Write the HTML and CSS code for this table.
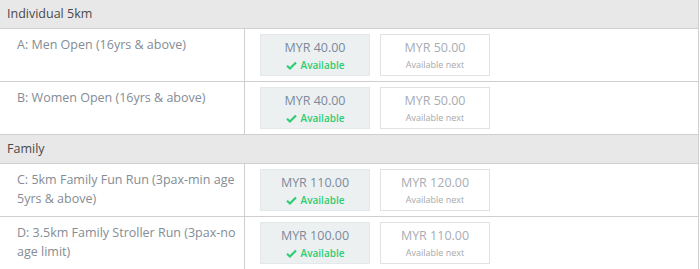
FILE: index.html
```html
<!DOCTYPE html>
<html>
<head>
<meta charset="utf-8">
<link rel="stylesheet" href="styles.css">
</head>
<body>
<div class="table">
  <div class="group-head">Individual 5km</div>
  <div class="row">
    <div class="cat">A: Men Open (16yrs &amp; above)</div>
    <div class="prices">
      <div class="box current"><div class="price">MYR 40.00</div><div class="status"><svg class="tick" viewBox="0 0 12 10"><path d="M1 5.2 L4.3 8.3 L11 1.6" fill="none" stroke="#2ecc71" stroke-width="2.4"/></svg>Available</div></div>
      <div class="box next"><div class="price">MYR 50.00</div><div class="status">Available next</div></div>
    </div>
  </div>
  <div class="row">
    <div class="cat">B: Women Open (16yrs &amp; above)</div>
    <div class="prices">
      <div class="box current"><div class="price">MYR 40.00</div><div class="status"><svg class="tick" viewBox="0 0 12 10"><path d="M1 5.2 L4.3 8.3 L11 1.6" fill="none" stroke="#2ecc71" stroke-width="2.4"/></svg>Available</div></div>
      <div class="box next"><div class="price">MYR 50.00</div><div class="status">Available next</div></div>
    </div>
  </div>
  <div class="group-head">Family</div>
  <div class="row">
    <div class="cat">C: 5km Family Fun Run (3pax-min age 5yrs &amp; above)</div>
    <div class="prices">
      <div class="box current"><div class="price">MYR 110.00</div><div class="status"><svg class="tick" viewBox="0 0 12 10"><path d="M1 5.2 L4.3 8.3 L11 1.6" fill="none" stroke="#2ecc71" stroke-width="2.4"/></svg>Available</div></div>
      <div class="box next"><div class="price">MYR 120.00</div><div class="status">Available next</div></div>
    </div>
  </div>
  <div class="row">
    <div class="cat">D: 3.5km Family Stroller Run (3pax-no age limit)</div>
    <div class="prices">
      <div class="box current"><div class="price">MYR 100.00</div><div class="status"><svg class="tick" viewBox="0 0 12 10"><path d="M1 5.2 L4.3 8.3 L11 1.6" fill="none" stroke="#2ecc71" stroke-width="2.4"/></svg>Available</div></div>
      <div class="box next"><div class="price">MYR 110.00</div><div class="status">Available next</div></div>
    </div>
  </div>
</div>
</body>
</html>
```
FILE: styles.css
```css
html, body {
  margin: 0;
  padding: 0;
  background: #fff;
}
body {
  font-family: "Open Sans", "Liberation Sans", sans-serif;
}
.table {
  width: 698px;
  border-right: 1px solid #cfcfcf;
}
.group-head {
  height: 28px;
  line-height: 28px;
  padding-left: 7px;
  background: #e8e8e8;
  border-bottom: 1px solid #cfcfcf;
  font-size: 12.5px;
  color: #4a4a4a;
}
.row {
  display: grid;
  grid-template-columns: 245px 1fr;
  height: 52px;
  border-bottom: 1px solid #cfcfcf;
}
.cat {
  border-right: 1px solid #cfcfcf;
  padding: 6px 2px 0 17px;
  font-size: 12.5px;
  line-height: 19px;
  color: #848c94;
}
.prices {
  display: flex;
  gap: 10px;
  padding: 5px 0 0 15px;
}
.box {
  width: 110px;
  height: 42px;
  box-sizing: border-box;
  text-align: center;
}
.box.current {
  background: #ecf0f1;
  border: 1px solid #e3e8ea;
}
.box.next {
  background: #fff;
  border: 1px solid #e2e2e2;
}
.price {
  font-size: 12.5px;
  line-height: 18px;
  margin-top: 4px;
  color: #7d8a9c;
}
.box.next .price {
  color: #a8adb3;
}
.status {
  font-size: 10px;
  line-height: 14px;
  margin-top: 1px;
  color: #2ecc71;
  font-weight: 600;
  display: flex;
  justify-content: center;
  align-items: center;
  gap: 4px;
}
.box.next .status {
  font-size: 9px;
  font-weight: 400;
  color: #a8a8a8;
}
.tick {
  width: 11px;
  height: 9px;
}
```
